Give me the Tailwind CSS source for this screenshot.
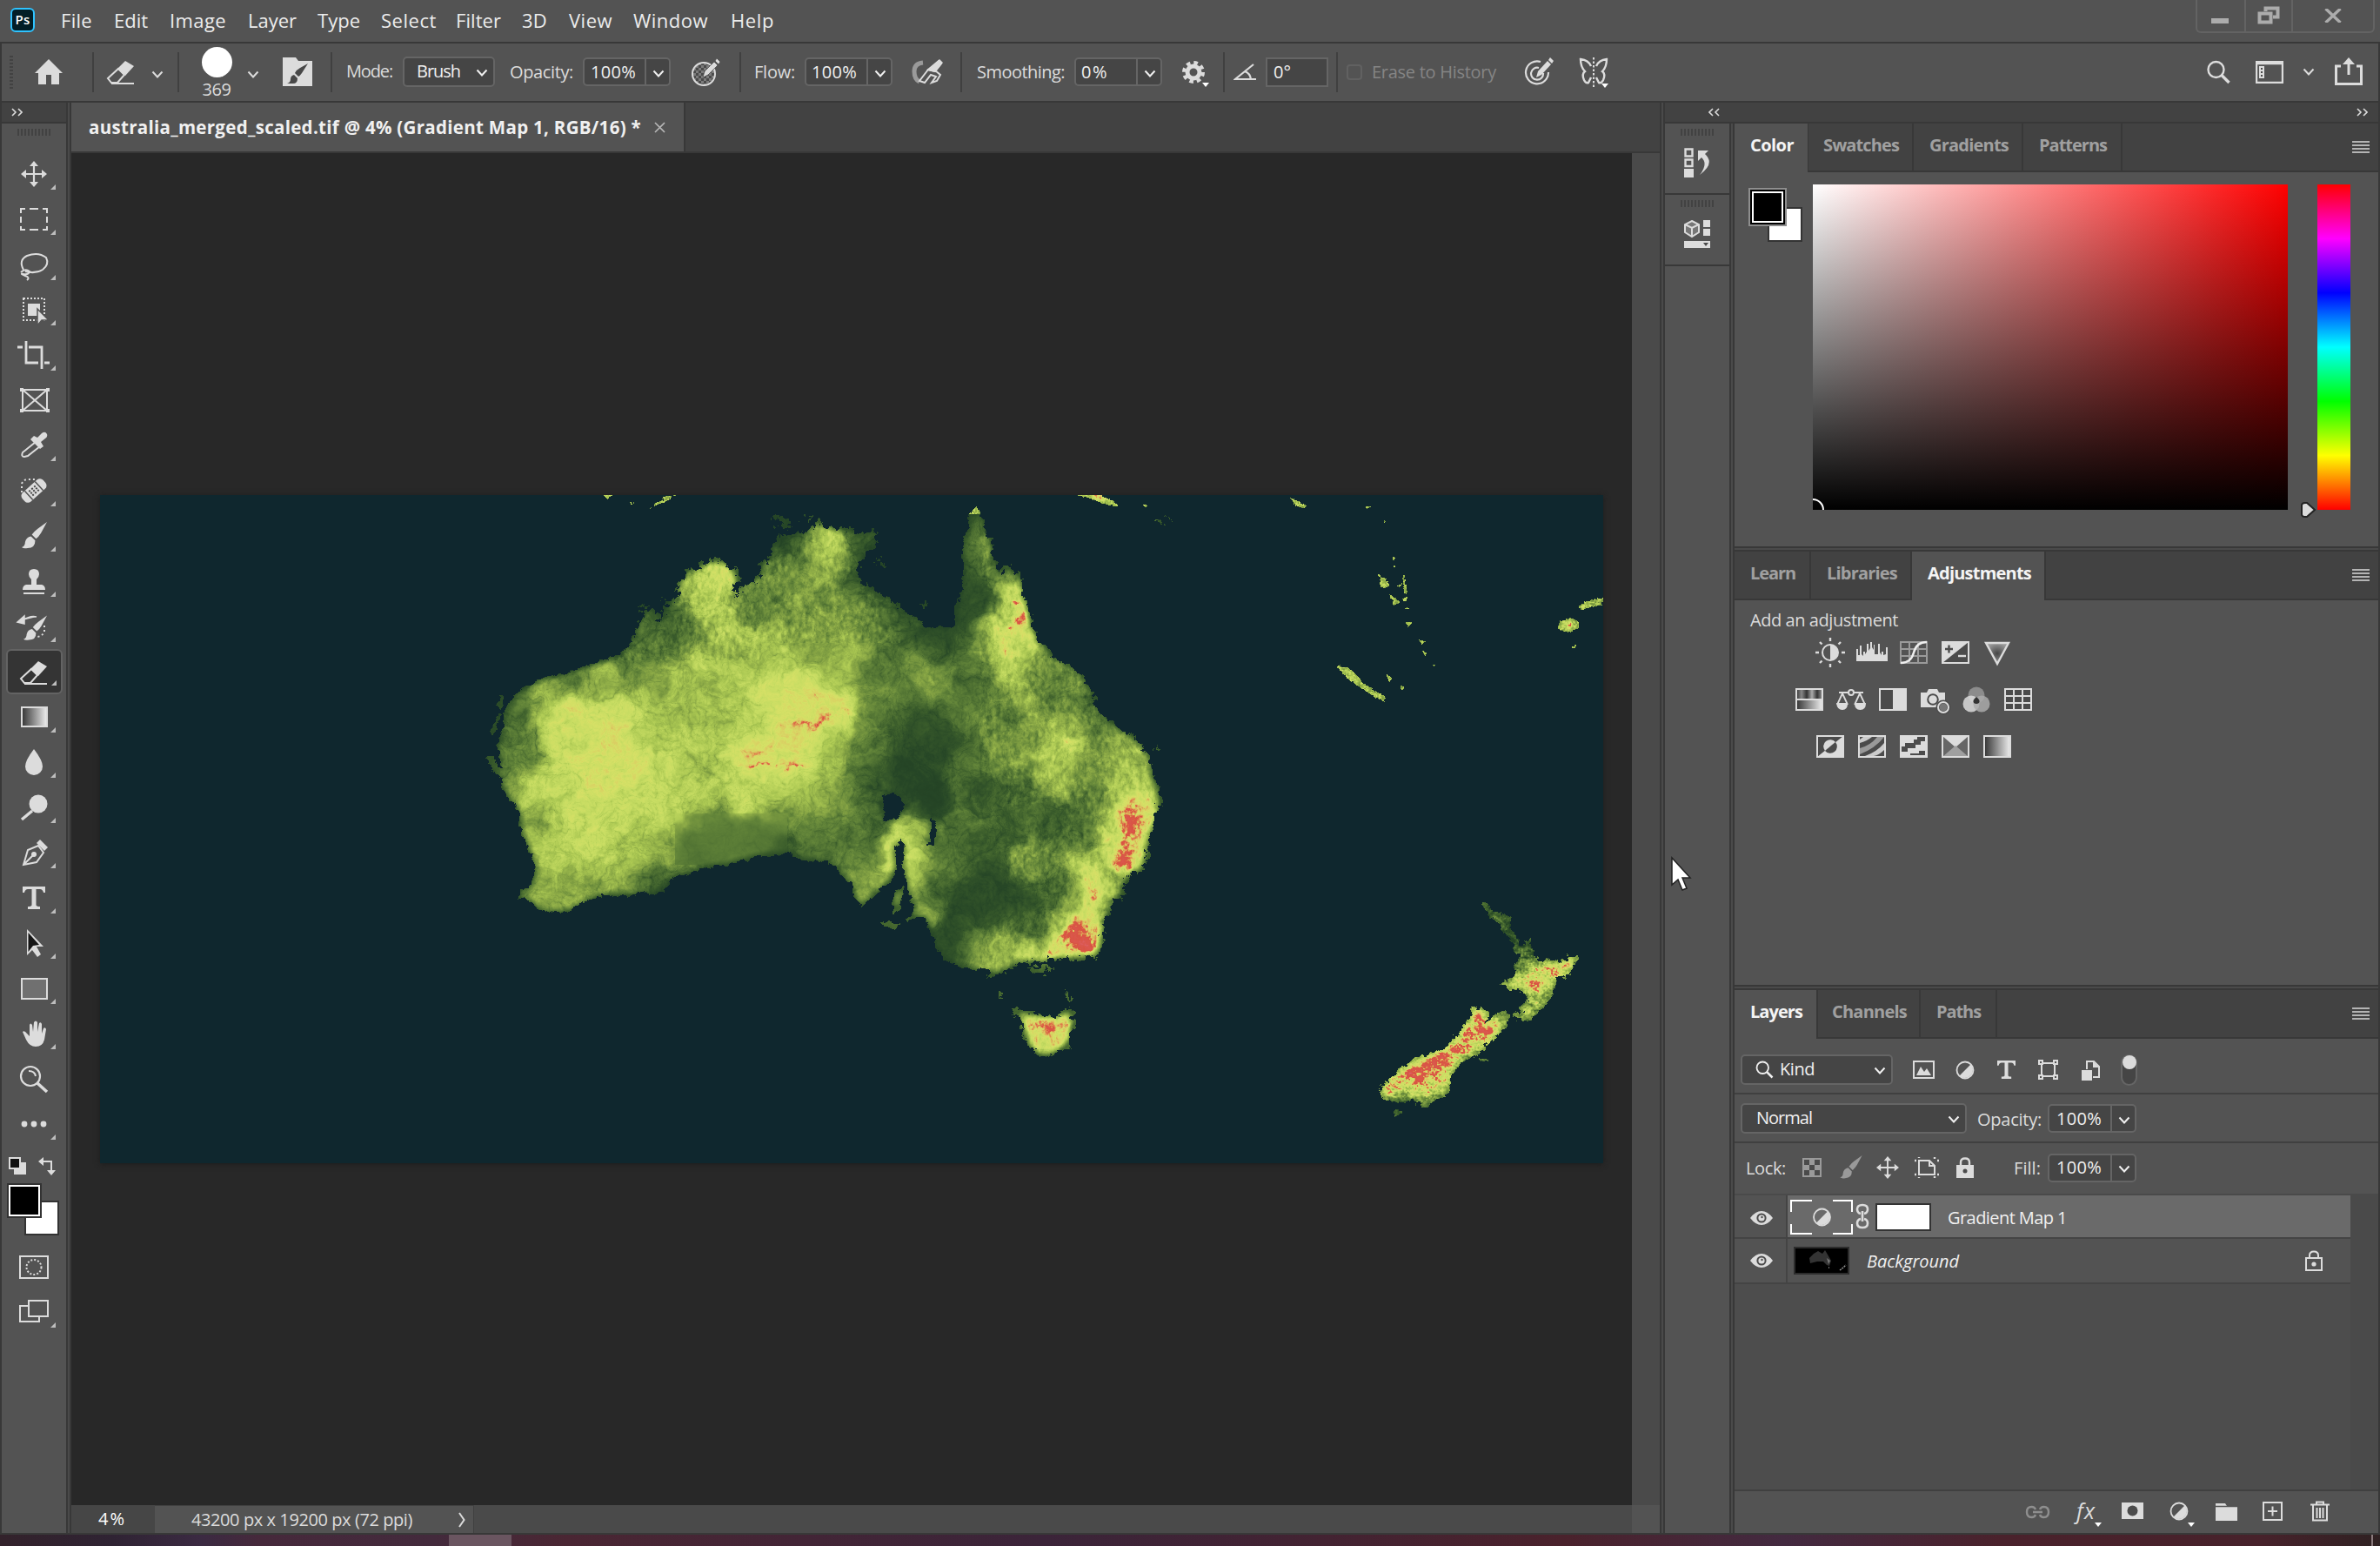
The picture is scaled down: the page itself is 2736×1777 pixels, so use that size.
<!DOCTYPE html>
<html lang="en">
<head>
<meta charset="utf-8">
<title>australia_merged_scaled.tif</title>
<script src="https://cdn.jsdelivr.net/npm/@tailwindcss/browser@4"></script>
</head>
<body class="w-[2736px] h-[1777px] overflow-hidden bg-[#383838] font-['Open_Sans','Noto_Sans',sans-serif] text-[20px] leading-none text-[#dcdcdc]">

<svg class="hidden">
  <symbol id="chev" viewBox="0 0 14 10"><path d="M1.5 1.5 L7 7.5 L12.5 1.5" fill="none" stroke="currentColor" stroke-width="2"/></symbol>
  <symbol id="menu" viewBox="0 0 20 14"><path d="M0 1H20M0 5H20M0 9H20M0 13H20" stroke="#b4b4b4" stroke-width="2"/></symbol>
  <symbol id="tri" viewBox="0 0 6 6"><path d="M6 0V6H0Z" fill="#bdbdbd"/></symbol>
  <symbol id="down" viewBox="0 0 8 5"><path d="M0 0H8L4 5Z" fill="#fff"/></symbol>
  <symbol id="eye" viewBox="0 0 26 16"><path d="M0 8Q6 0 13 0T26 8Q20 16 13 16T0 8Z" fill="#dcdcdc"/><circle cx="13" cy="8" r="5.6" fill="#4b4b4b"/><circle cx="13" cy="8" r="3.6" fill="#dcdcdc"/><circle cx="13.5" cy="7" r="1.2" fill="#4b4b4b"/></symbol>
  <symbol id="adj" viewBox="0 0 22 22"><circle cx="11" cy="11" r="9.5" fill="none" stroke="#dcdcdc" stroke-width="1.8"/><path d="M17.7 4.3A9.5 9.5 0 0 1 4.3 17.7Z" fill="#dcdcdc"/></symbol>
  <symbol id="mag" viewBox="0 0 28 28"><circle cx="11" cy="11" r="9" fill="none" stroke="currentColor" stroke-width="2.4"/><path d="M17.5 17.5L26 26" stroke="currentColor" stroke-width="3.4"/></symbol>
  <symbol id="mv" viewBox="-15 -15 30 30"><path d="M-11 0H11M0 -11V11" stroke="currentColor" stroke-width="2.2"/><path d="M-15 0L-9 -5V5ZM15 0L9 -5V5ZM0 -15L-5 -9H5ZM0 15L-5 9H5Z" fill="currentColor"/></symbol>
  <symbol id="brush" viewBox="-15 -16 30 32"><path d="M15 -16L8 -3Q5 2 2 4L-3 -1Q0 -5 4 -8ZM-4 1L1 6Q1 15 -8 15Q-13 16 -15 14Q-11 13 -11 8Q-10 2 -4 1Z" fill="currentColor"/></symbol>
  <symbol id="tee" viewBox="-13 -13 26 26"><path d="M-13 -13H13V-6H11Q10 -10 7 -10H2.5V8Q2.5 10 7 10V13H-7V10Q-2.500 10 -2.500 8V-10H-7Q-10 -10 -11 -6H-13Z" fill="#dcdcdc"/></symbol>
  <symbol id="grip" viewBox="0 0 38 8"><path d="M0 4H38" stroke="#424242" stroke-width="8" stroke-dasharray="2 2"/></symbol>
  <symbol id="eraser" viewBox="-17 -15 34 30"><path d="M-15 7L-3 -4L4 3L-4 12H-11Z" fill="none" stroke="#dcdcdc" stroke-width="2"/><path d="M-4 -4L5 -13L15 -7L5 4Z" fill="#dcdcdc"/><path d="M-11 13H15" stroke="#dcdcdc" stroke-width="2"/></symbol>
</svg>

<div class="flex flex-col w-full h-full">
  <!-- menu bar -->
  <div class="flex items-center h-[48px] bg-[#535353] text-[22px] text-[#ececec] shrink-0">
    <div class="ml-[12px] mt-[-3px] size-[28px] rounded-[6px] border-2 border-[#2fc3ff] bg-[#021e26] text-white text-[15px] font-semibold flex items-center justify-center"><span class="fit w-[17px]">Ps</span></div>
    <span class="fit ml-[30px] w-[36px] mt-[-1px]">File</span>
    <span class="fit ml-[25px] w-[39px] mt-[-1px]">Edit</span>
    <span class="fit ml-[25px] w-[65px] mt-[-1px]">Image</span>
    <span class="fit ml-[25px] w-[56px] mt-[-1px]">Layer</span>
    <span class="fit ml-[24px] w-[49px] mt-[-1px]">Type</span>
    <span class="fit ml-[24px] w-[64px] mt-[-1px]">Select</span>
    <span class="fit ml-[22px] w-[52px] mt-[-1px]">Filter</span>
    <span class="fit ml-[24px] w-[29px] mt-[-1px]">3D</span>
    <span class="fit ml-[25px] w-[50px] mt-[-1px]">View</span>
    <span class="fit ml-[24px] w-[86px] mt-[-1px]">Window</span>
    <span class="fit ml-[26px] w-[50px] mt-[-1px]">Help</span>
    <div class="ml-auto mr-[6px] self-start h-[38px] w-[206px] flex border-2 border-t-0 border-[#636363] rounded-b-[6px]">
      <div class="w-[56px] border-r-2 border-[#636363] flex items-center justify-center pt-[12px] pr-[2px]"><div class="w-[20px] h-[6px] bg-[#acacac]"></div></div>
      <div class="w-[54px] border-r-2 border-[#636363] flex items-center justify-center"><svg class="w-[26px] h-[22px]" viewBox="0 0 26 22"><path d="M9.500 6V2.500H23.500V12.500H18M2.500 8.500H15.500V18.500H2.500Z" fill="none" stroke="#acacac" stroke-width="4"/></svg></div>
      <div class="flex-1 flex items-center justify-center"><svg class="w-[20px] h-[16px]" viewBox="0 0 20 16"><path d="M1.500 0L18.500 16M18.500 0L1.500 16" stroke="#acacac" stroke-width="3.4"/></svg></div>
    </div>
  </div>

  <!-- options bar -->
  <div class="mt-[2px] ml-[2px] mr-[2px] flex items-center h-[66px] bg-[#535353] shrink-0">
    <svg class="ml-[9px] w-[4px] h-[38px] shrink-0" viewBox="0 0 4 38"><path d="M2 0V38" stroke="#424242" stroke-width="4" stroke-dasharray="2 2"/></svg>
    <svg class="ml-[25px] w-[32px] h-[30px] shrink-0" viewBox="0 0 32 30"><path d="M16 0L32 16H28V29H19V18H13V29H4V16H0Z" fill="#dcdcdc"/></svg>
    <div class="ml-[34px] w-[2px] h-[46px] bg-[#404040]"></div>
    <svg class="ml-[14px] w-[34px] h-[30px] shrink-0"><use href="#eraser"/></svg>
    <svg class="ml-[18px] mt-[5px] w-[14px] h-[10px] shrink-0"><use href="#chev"/></svg>
    <div class="ml-[16px] w-[2px] h-[46px] bg-[#404040]"></div>
    <div class="ml-[23px] w-[40px] h-[62px] flex flex-col items-center"><div class="size-[35px] mt-[2px] rounded-full bg-white shrink-0"></div><span class="fit w-[33px] mt-[0px]">369</span></div>
    <svg class="ml-[15px] mt-[5px] w-[14px] h-[10px] shrink-0"><use href="#chev"/></svg>
    <svg class="ml-[27px] w-[34px] h-[34px] shrink-0" viewBox="0 0 34 34"><path d="M0 0H15L18 4H34V33H0Z" fill="#dcdcdc"/><path d="M29 7L22 18Q20 21 18 22L14 18Q16 14 20 12ZM13 20L17 24Q17 30 12 30H5Q9 29 9 25Q9 21 13 20Z" fill="#484848"/></svg>
    <div class="ml-[21px] w-[2px] h-[46px] bg-[#404040]"></div>
    <span class="fit ml-[16px] w-[53px] mt-[-3px]">Mode:</span>
    <div class="ml-[12px] w-[106px] h-[35px] mt-[-1px] rounded-[5px] border-2 border-[#656565] bg-[#454545] flex items-center text-[#f0f0f0]"><span class="fit ml-[14px] w-[50px] mt-[-2px]">Brush</span><svg class="ml-[18px] mt-[3px] w-[14px] h-[10px]"><use href="#chev"/></svg></div>
    <span class="fit ml-[17px] w-[73px]">Opacity:</span>
    <div class="ml-[11px] w-[101px] h-[33px] mt-[-1px] rounded-[5px] border-2 border-[#656565] bg-[#454545] flex items-center text-[#f0f0f0]"><span class="fit ml-[7px] w-[52px]">100%</span><div class="ml-[10px] w-[2px] h-full bg-[#656565]"></div><svg class="ml-[7px] mt-[4px] w-[14px] h-[10px]"><use href="#chev"/></svg></div>
    <svg class="ml-[23px] w-[36px] h-[34px] shrink-0" viewBox="0 0 36 34"><defs><pattern id="ck" width="6" height="6" patternUnits="userSpaceOnUse"><rect width="6" height="6" fill="#7c7c7c"/><path d="M0 0H3V3H0ZM3 3H6V6H3Z" fill="#4a4a4a"/></pattern></defs><circle cx="15" cy="19" r="13" fill="url(#ck)" stroke="#dcdcdc" stroke-width="2"/><path d="M30 1L34 5L32 8L28 4ZM27 5L31 9L20 20L14 23L16 16Z" fill="#dcdcdc" stroke="#535353" stroke-width=".8"/></svg>
    <div class="ml-[20px] w-[2px] h-[46px] bg-[#404040]"></div>
    <span class="fit ml-[15px] w-[47px]">Flow:</span>
    <div class="ml-[11px] w-[101px] h-[33px] mt-[-1px] rounded-[5px] border-2 border-[#656565] bg-[#454545] flex items-center text-[#f0f0f0]"><span class="fit ml-[6px] w-[52px]">100%</span><div class="ml-[11px] w-[2px] h-full bg-[#656565]"></div><svg class="ml-[7px] mt-[4px] w-[14px] h-[10px]"><use href="#chev"/></svg></div>
    <svg class="ml-[21px] w-[38px] h-[30px] shrink-0" viewBox="0 0 38 30"><path d="M14 4Q4 5 4 14Q4 23 10 26" fill="none" stroke="#9a9a9a" stroke-width="5"/><path d="M32 2L35 5L28 14L20 12ZM20 12L10 25L16 27L23 18L29 20L24 27L30 25L34 18L28 13Z" fill="#535353" stroke="#dcdcdc" stroke-width="2"/><path d="M33 0L37 4L28 15L19 13Z" fill="#dcdcdc"/></svg>
    <div class="ml-[19px] w-[2px] h-[46px] bg-[#404040]"></div>
    <span class="fit ml-[17px] w-[101px]">Smoothing:</span>
    <div class="ml-[11px] w-[101px] h-[33px] mt-[-1px] rounded-[5px] border-2 border-[#656565] bg-[#454545] flex items-center text-[#f0f0f0]"><span class="fit ml-[6px] w-[31px]">0%</span><div class="ml-[32px] w-[2px] h-full bg-[#656565]"></div><svg class="ml-[7px] mt-[4px] w-[14px] h-[10px]"><use href="#chev"/></svg></div>
    <svg class="ml-[22px] w-[36px] h-[36px] shrink-0" viewBox="0 0 36 36"><circle cx="14" cy="18" r="7" fill="none" stroke="#dcdcdc" stroke-width="5"/><circle cx="14" cy="18" r="11" fill="none" stroke="#dcdcdc" stroke-width="4" stroke-dasharray="4.600 4.040"/><path d="M24 30H32L28 35Z" fill="#fff"/></svg>
    <div class="ml-[12px] w-[2px] h-[46px] bg-[#404040]"></div>
    <svg class="ml-[10px] w-[28px] h-[20px] shrink-0" viewBox="0 0 28 20"><path d="M23 1L2 18H26M13 9Q19 11 20 18" fill="none" stroke="#dcdcdc" stroke-width="2.200"/></svg>
    <div class="ml-[9px] w-[72px] h-[34px] border-2 border-[#656565] bg-[#454545] flex items-center text-[#f0f0f0]"><span class="fit ml-[7px] w-[20px]">0°</span></div>
    <div class="ml-[9px] w-[2px] h-[46px] bg-[#404040]"></div>
    <div class="ml-[10px] size-[18px] rounded-[4px] border-2 border-[#616161] shrink-0"></div>
    <span class="fit ml-[11px] w-[143px] text-[#858585]">Erase to History</span>
    <svg class="ml-[32px] w-[36px] h-[34px] shrink-0" viewBox="0 0 36 34"><path d="M19 5A13 13 0 1 0 28 17M17 12A7 7 0 1 0 22 18" fill="none" stroke="#dcdcdc" stroke-width="2.200"/><path d="M30 0L34 4L32 7L28 3ZM27 4L31 8L20 20L14 23L16 16Z" fill="#dcdcdc"/></svg>
    <svg class="ml-[26px] w-[38px] h-[38px] shrink-0" viewBox="0 0 38 38"><path d="M15 12Q12 5 3 4Q3 13 8 18Q4 21 7 28Q9 32 12 31L15 25M21 12Q24 5 33 4Q33 13 28 18Q32 21 29 28Q27 32 24 31L21 25" fill="none" stroke="#dcdcdc" stroke-width="2.400"/><path d="M18 2V38" stroke="#dcdcdc" stroke-width="2" stroke-dasharray="2.500 2"/><path d="M27 32H35L31 37Z" fill="#fff"/></svg>
    <svg class="ml-auto w-[29px] h-[28px] shrink-0"><use href="#mag"/></svg>
    <svg class="ml-[28px] w-[32px] h-[26px] shrink-0" viewBox="0 0 32 26"><path d="M1 1H31V25H1ZM1 3H31" fill="none" stroke="#dcdcdc" stroke-width="2.400"/><path d="M4 6H10V20H4Z" fill="#dcdcdc"/><path d="M6 8H8V10H6ZM6 12H8V14H6ZM6 16H8V18H6Z" fill="#484848"/></svg>
    <svg class="ml-[22px] w-[14px] h-[10px] shrink-0"><use href="#chev"/></svg>
    <svg class="ml-[23px] mr-[18px] w-[32px] h-[32px] mt-[-2px] shrink-0" viewBox="0 0 32 32"><path d="M7 10H1.500V30.500H30.500V10H25" fill="none" stroke="#dcdcdc" stroke-width="3"/><path d="M16 20V5" stroke="#dcdcdc" stroke-width="3"/><path d="M16 0L23 8H9Z" fill="#dcdcdc"/></svg>
  </div>

  <div class="mt-[2px] flex h-[1644px] shrink-0">
    <!-- tools -->
    <div class="ml-[2px] w-[74px] flex flex-col shrink-0">
      <div class="h-[22px] bg-[#424242] flex items-center pl-[11px]"><svg class="w-[13px] h-[10px]" viewBox="0 0 13 10"><path d="M1 1L5 5L1 9M8 1L12 5L8 9" fill="none" stroke="#dcdcdc" stroke-width="1.600"/></svg></div>
      <div class="mt-[2px] flex-1 bg-[#535353] flex flex-col">
        <svg class="ml-[18px] mt-[6px] w-[38px] h-[8px] shrink-0"><use href="#grip"/></svg>
        <div id="tools" class="mt-[18px] flex flex-col"></div>
        <div class="mt-[12px] flex h-[22px]"><svg class="ml-[8px] w-[20px] h-[20px]" viewBox="0 0 20 20"><path d="M6 6H20V20H6Z" fill="#dcdcdc"/><path d="M1 1H13V13H1Z" fill="#111" stroke="#dcdcdc" stroke-width="2"/></svg>
        <svg class="ml-[14px] w-[22px] h-[22px]" viewBox="0 0 22 22"><path d="M5 5H15V16" fill="none" stroke="#dcdcdc" stroke-width="2"/><path d="M0 5L6 0V10ZM10 15H20L15 21Z" fill="#dcdcdc"/></svg></div>
        <div class="relative mt-[8px] h-[62px] w-full">
          <div class="absolute left-[26px] top-[20px] size-[40px] bg-white border-2 border-[#333]"></div>
          <div class="absolute left-[6px] top-0 size-[40px] bg-black border-2 border-[#333] outline-2 -outline-offset-4 outline-white"></div>
        </div>
        <svg class="ml-[20px] mt-[21px] w-[34px] h-[27px] shrink-0" viewBox="0 0 34 27"><path d="M1 1H33V26H1Z" fill="none" stroke="#dcdcdc" stroke-width="2"/><circle cx="17" cy="13.500" r="8.500" fill="none" stroke="#dcdcdc" stroke-width="2" stroke-dasharray="2 2"/></svg>
        <svg class="ml-[20px] mt-[24px] w-[44px] h-[32px] shrink-0" viewBox="0 0 44 32"><path d="M1 7H23V25H1Z" fill="none" stroke="#dcdcdc" stroke-width="2"/><path d="M11 1H33V19H11Z" fill="#535353" stroke="#dcdcdc" stroke-width="2"/><path d="M42 26V32H36Z" fill="#bdbdbd"/></svg>
      </div>
    </div>
    <div class="ml-[2px] w-[2px] bg-[#4a4a4a] shrink-0"></div>

    <!-- document -->
    <div class="ml-[2px] w-[1826px] flex flex-col shrink-0">
      <div class="flex h-[56px] bg-[#424242] shrink-0">
        <div class="w-[706px] bg-[#535353] border-r-2 border-[#383838] flex items-center font-bold text-[#f0f0f0]">
          <span class="fit ml-[20px] w-[635px] mt-[1px] text-[20.5px]">australia_merged_scaled.tif @ 4% (Gradient Map 1, RGB/16) *</span>
          <svg class="ml-[15px] w-[13px] h-[13px]" viewBox="0 0 13 13"><path d="M1 1L12 12M12 1L1 12" stroke="#b8b8b8" stroke-width="1.600"/></svg>
        </div>
      </div>
      <div class="mt-[2px] flex h-[1554px]">
        <div class="w-[1794px] bg-[#282828] pl-[33px] pt-[393px]"><canvas id="map" width="1728" height="768" class="block w-[1728px] h-[768px] bg-[#0f272e] shadow-[0_1px_6px_#1c1c1c]"></canvas></div>
        <div class="w-[32px] bg-[#4a4a4a]"></div>
      </div>
      <div class="flex h-[32px] bg-[#4a4a4a] text-[20px] shrink-0">
        <div class="w-[96px] bg-[#464646] flex items-center"><span class="fit ml-[31px] w-[32px] text-white">4%</span></div>
        <div class="w-[367px] bg-[#535353] border-t-1 border-r-1 border-[#404040] flex items-center"><span class="fit ml-[42px] w-[254px]">43200 px x 19200 px (72 ppi)</span><svg class="ml-[53px] w-[8px] h-[18px]" viewBox="0 0 8 18"><path d="M1 1L6.500 9L1 17" fill="none" stroke="#dcdcdc" stroke-width="2"/></svg></div>
        <div class="ml-auto w-[32px] bg-[#535353]"></div>
      </div>
    </div>
    <div class="ml-[2px] w-[2px] bg-[#4a4a4a] shrink-0"></div>

    <!-- right dock -->
    <div class="ml-[2px] flex flex-col w-[820px] shrink-0">
      <div class="h-[22px] bg-[#424242] flex items-center shrink-0">
        <svg class="ml-[50px] w-[13px] h-[10px]" viewBox="0 0 13 10"><path d="M5 1L1 5L5 9M12 1L8 5L12 9" fill="none" stroke="#dcdcdc" stroke-width="1.600"/></svg>
        <svg class="ml-auto mr-[12px] w-[13px] h-[10px]" viewBox="0 0 13 10"><path d="M1 1L5 5L1 9M8 1L12 5L8 9" fill="none" stroke="#dcdcdc" stroke-width="1.600"/></svg>
      </div>
      <div class="mt-[2px] flex h-[1620px]">
        <div class="w-[74px] flex flex-col gap-[2px] shrink-0">
          <div class="h-[80px] bg-[#535353] flex flex-col items-center"><svg class="mt-[6px] w-[38px] h-[8px]"><use href="#grip"/></svg>
            <svg class="mt-[14px] w-[30px] h-[34px]" viewBox="0 0 30 34"><path d="M1.500 1.500H9.500V9.500H1.500ZM1.500 13.500H9.500V21H1.500Z" fill="none" stroke="#dcdcdc" stroke-width="2.400"/><path d="M0 24H11V34H0Z" fill="#dcdcdc"/><path d="M16 3H28L24 7Q36 18 18 31Q28 18 20 11L16 15Z" fill="#dcdcdc"/></svg></div>
          <div class="h-[80px] bg-[#535353] flex flex-col items-center"><svg class="mt-[6px] w-[38px] h-[8px]"><use href="#grip"/></svg>
            <svg class="mt-[15px] w-[30px] h-[33px]" viewBox="0 0 30 33"><path d="M9 1L17 5V14L9 19L1 14V5Z" fill="#777" stroke="#dcdcdc" stroke-width="2"/><path d="M1 5L9 9L17 5M9 9V19" fill="none" stroke="#dcdcdc" stroke-width="2"/><path d="M22 0H30V8H22ZM22 10H30V18H22ZM0 24H30V32H0Z" fill="#dcdcdc"/><path d="M22 26H28L25 30Z" fill="#484848"/></svg></div>
          <div class="flex-1 bg-[#535353]"></div>
        </div>
        <div class="ml-[2px] w-[2px] bg-[#4a4a4a] shrink-0"></div>
        <div class="ml-[2px] w-[740px] flex flex-col shrink-0">

          <!-- color panel -->
          <div class="h-[486px] bg-[#535353] flex flex-col shrink-0">
            <div class="flex h-[56px] bg-[#424242] font-bold text-[#a0a0a0] shrink-0">
              <div class="w-[85px] bg-[#535353] border-r-1 border-[#383838] pl-[18px] pt-[11px] text-[#f4f4f4]"><span class="fit block w-[50px]">Color</span></div>
              <div class="w-[121px] border-r-2 border-b-2 border-[#383838] pl-[17px] pt-[11px]"><span class="fit block w-[87px]">Swatches</span></div>
              <div class="w-[126px] border-r-2 border-b-2 border-[#383838] pl-[18px] pt-[11px]"><span class="fit block w-[91px]">Gradients</span></div>
              <div class="w-[114px] border-r-2 border-b-2 border-[#383838] pl-[18px] pt-[11px]"><span class="fit block w-[78px]">Patterns</span></div>
              <div class="flex-1 border-b-2 border-[#383838] flex justify-end pr-[10px] pt-[20px]"><svg class="w-[20px] h-[14px]"><use href="#menu"/></svg></div>
            </div>
            <div class="flex pt-[14px]">
              <div class="relative ml-[16px] w-[74px] h-[80px] shrink-0">
                <div class="absolute left-[22px] top-[26px] size-[40px] bg-white border-2 border-[#333]"></div>
                <div class="absolute left-0 top-[4px] size-[44px] bg-black border-2 border-[#8e8e8e] outline-2 -outline-offset-6 outline-white"></div>
              </div>
              <div class="w-[546px] h-[374px] overflow-hidden relative bg-[linear-gradient(to_bottom,transparent,#000),linear-gradient(to_right,#fff,#f00)]"><div class="absolute left-[-13px] bottom-[-13px] size-[26px] rounded-full border-2 border-white"></div></div>
              <svg class="ml-[14px] mt-[364px] w-[19px] h-[20px]" viewBox="0 0 19 20"><path d="M2 5Q2 2 6 2H8L17 10L8 18H6Q2 18 2 15Z" fill="#dcdcdc" stroke="#222" stroke-width="2"/></svg>
              <div class="ml-[1px] w-[38px] h-[374px] bg-[linear-gradient(to_bottom,#f00,#f0f,#00f,#0ff,#0f0,#ff0,#f00)]"></div>
            </div>
          </div>
          <div class="my-[2px] h-[2px] bg-[#4a4a4a] shrink-0"></div>

          <!-- adjustments panel -->
          <div class="h-[498px] bg-[#535353] flex flex-col shrink-0">
            <div class="flex h-[56px] bg-[#424242] font-bold text-[#a0a0a0] shrink-0">
              <div class="w-[88px] border-r-2 border-b-2 border-[#383838] pl-[18px] pt-[11px]"><span class="fit block w-[52px]">Learn</span></div>
              <div class="w-[116px] border-r-2 border-b-2 border-[#383838] pl-[18px] pt-[11px]"><span class="fit block w-[81px]">Libraries</span></div>
              <div class="w-[154px] bg-[#535353] border-r-2 border-[#383838] pl-[18px] pt-[11px] text-[#f4f4f4]"><span class="fit block w-[119px]">Adjustments</span></div>
              <div class="flex-1 border-b-2 border-[#383838] flex justify-end pr-[10px] pt-[20px]"><svg class="w-[20px] h-[14px]"><use href="#menu"/></svg></div>
            </div>
            <span class="fit block ml-[18px] mt-[9px] w-[170px] h-[25px]">Add an adjustment</span>
            <div class="flex ml-[86px] mt-[8px]">
              <svg class="w-[48px] h-[36px]" viewBox="-24 -18 48 36"><circle r="9" fill="none" stroke="#dcdcdc" stroke-width="2"/><path d="M0 -9A9 9 0 0 1 0 9Z" fill="#dcdcdc"/><path d="M0 -17V-13M0 13V17M-17 0H-13M13 0H17M-12 -12L-9.500 -9.500M12 12L9.500 9.500M-12 12L-9.500 9.500M12 -12L9.500 -9.500" stroke="#dcdcdc" stroke-width="2.400"/></svg>
              <svg class="w-[48px] h-[36px]" viewBox="-24 -18 48 36"><path d="M-18 10V-4H-16V3H-14V-8H-12V2L-10 4V-1H-8V2L-6 -1V-10H-4V-2L-2 -5V-12H0V-6L2 -3V-9H3V2H7V-10H9V0L11 3V-1H13V3L16 2V-6H18V10Z" fill="#dcdcdc"/></svg>
              <svg class="w-[48px] h-[36px]" viewBox="-24 -18 48 36"><path d="M-15 -12H15V12H-15ZM-5 -12V12M5 -12V12M-15 -4H15M-15 4H15" fill="none" stroke="#9a9a9a" stroke-width="2"/><path d="M-15 12Q-3 12 0 0T15 -12" fill="none" stroke="#eee" stroke-width="2.400"/></svg>
              <svg class="w-[48px] h-[36px]" viewBox="-24 -18 48 36"><path d="M-15 -12H15V12H-15Z" fill="#4b4b4b" stroke="#dcdcdc" stroke-width="2"/><path d="M-15 -12H15L-15 12Z" fill="#dcdcdc"/><path d="M-12 -4H-3M-7.500 -8.500V.5" stroke="#4b4b4b" stroke-width="2.400"/><path d="M3 4H12" stroke="#dcdcdc" stroke-width="2.400"/></svg>
              <svg class="w-[48px] h-[36px]" viewBox="-24 -18 48 36"><defs><radialGradient id="vg"><stop offset="0" stop-color="#444"/><stop offset="1" stop-color="#999"/></radialGradient></defs><path d="M-13 -11H13L0 13Z" fill="url(#vg)" stroke="#dcdcdc" stroke-width="2.400"/></svg>
            </div>
            <div class="flex ml-[62px] mt-[18px]">
              <svg class="w-[48px] h-[36px]" viewBox="-24 -18 48 36"><defs><linearGradient id="g1"><stop offset="0" stop-color="#333"/><stop offset="1" stop-color="#eee"/></linearGradient><linearGradient id="g2"><stop offset="0" stop-color="#333"/><stop offset=".2" stop-color="#888"/><stop offset=".4" stop-color="#333"/><stop offset=".6" stop-color="#aaa"/><stop offset=".8" stop-color="#333"/><stop offset="1" stop-color="#999"/></linearGradient></defs><path d="M-15 -12H15V12H-15Z" fill="url(#g1)"/><path d="M-15 -12H15V-1H-15Z" fill="url(#g2)"/><path d="M-15 -12H15V12H-15ZM-15 0H15" fill="none" stroke="#dcdcdc" stroke-width="2"/></svg>
              <svg class="w-[48px] h-[36px]" viewBox="-24 -18 48 36"><path d="M-14 -8H-3M3 -8H14M-10 -7L-16 6M-10 -7L-4 6M10 -7L16 6M10 -7L4 6" fill="none" stroke="#dcdcdc" stroke-width="1.800"/><circle cy="-8" r="3" fill="none" stroke="#dcdcdc" stroke-width="2"/><path d="M-17 4H-4Q-4 12 -10 12T-17 4ZM4 4H17Q17 12 10.500 12T4 4Z" fill="#dcdcdc"/></svg>
              <svg class="w-[48px] h-[36px]" viewBox="-24 -18 48 36"><path d="M-15 -12H15V12H-15Z" fill="#4b4b4b" stroke="#dcdcdc" stroke-width="2"/><path d="M0 -12H15V12H0Z" fill="#dcdcdc"/></svg>
              <svg class="w-[48px] h-[36px]" viewBox="-24 -18 48 36"><path d="M-16 -8H-9L-7 -12H3L5 -8H12V9H-16Z" fill="#dcdcdc"/><circle cx="-2" cy="0" r="5.800" fill="#dcdcdc" stroke="#4b4b4b" stroke-width="2"/><circle cx="10" cy="9" r="6.500" fill="#777" stroke="#4b4b4b" stroke-width="4"/><circle cx="10" cy="9" r="6" fill="none" stroke="#dcdcdc" stroke-width="2"/></svg>
              <svg class="w-[48px] h-[36px]" viewBox="-24 -18 48 36"><circle cy="-5" r="9.500" fill="#8c8c8c"/><circle cx="-6" cy="5" r="9.500" fill="#dcdcdc" opacity=".85"/><circle cx="6" cy="5" r="9.500" fill="#aaa" opacity=".85"/><path d="M0 -3Q5 1 3 4Q0 6 -3 4Q-5 1 0 -3Z" fill="#333"/></svg>
              <svg class="w-[48px] h-[36px]" viewBox="-24 -18 48 36"><path d="M-15 -12H15V12H-15Z" fill="#4b4b4b"/><path d="M-15 -12H15V12H-15ZM-5 -12V12M5 -12V12M-15 -4H15M-15 4H15" fill="none" stroke="#dcdcdc" stroke-width="2"/></svg>
            </div>
            <div class="flex ml-[86px] mt-[18px]">
              <svg class="w-[48px] h-[36px]" viewBox="-24 -18 48 36"><path d="M-15 -12H15V12H-15Z" fill="#4b4b4b" stroke="#dcdcdc" stroke-width="2"/><path d="M15 -12V12H-15Z" fill="#dcdcdc"/><path d="M6 -5A7.500 7.500 0 0 0 -6 5Z" fill="#dcdcdc"/><path d="M6 -5A7.500 7.500 0 0 1 -6 5Z" fill="#4b4b4b"/></svg>
              <svg class="w-[48px] h-[36px]" viewBox="-24 -18 48 36"><path d="M-14 -11H14V11H-14Z" fill="#4b4b4b"/><path d="M-14 2Q-2 -1 6 -11H14Q4 2 -14 9Z" fill="#999"/><path d="M-14 -4Q-6 -6 0 -11H-10L-14 -8ZM-8 11Q6 6 14 -4V4Q8 10 2 11Z" fill="#ccc"/><path d="M-15 -12H15V12H-15Z" fill="none" stroke="#dcdcdc" stroke-width="2"/></svg>
              <svg class="w-[48px] h-[36px]" viewBox="-24 -18 48 36"><path d="M-16 -13H16V13H-16Z" fill="#dcdcdc"/><path d="M-14 6V0H-10V-4H0V-8H4V-11H13V-6H8V-2H2V2H-7V6ZM-4 10V8H6V5H13V10Z" fill="#4b4b4b"/></svg>
              <svg class="w-[48px] h-[36px]" viewBox="-24 -18 48 36"><path d="M-15 -12H15V12H-15Z" fill="#666"/><path d="M-15 -12H15L0 1Z" fill="#dcdcdc"/><path d="M-15 12H15L0 -1Z" fill="#a0a0a0"/><path d="M-15 -12H15V12H-15Z" fill="none" stroke="#dcdcdc" stroke-width="2"/></svg>
              <svg class="w-[48px] h-[36px]" viewBox="-24 -18 48 36"><path d="M-15 -12H15V12H-15Z" fill="url(#g1)" stroke="#dcdcdc" stroke-width="2"/></svg>
            </div>
          </div>
          <div class="my-[2px] h-[2px] bg-[#4a4a4a] shrink-0"></div>

          <!-- layers panel -->
          <div class="h-[624px] bg-[#535353] flex flex-col shrink-0">
            <div class="flex h-[56px] bg-[#424242] font-bold text-[#a0a0a0] shrink-0">
              <div class="w-[96px] bg-[#535353] border-r-2 border-[#383838] pl-[18px] pt-[11px] text-[#f4f4f4]"><span class="fit block w-[60px]">Layers</span></div>
              <div class="w-[118px] border-r-2 border-b-2 border-[#383838] pl-[16px] pt-[11px]"><span class="fit block w-[86px]">Channels</span></div>
              <div class="w-[88px] border-r-2 border-b-2 border-[#383838] pl-[18px] pt-[11px]"><span class="fit block w-[51px]">Paths</span></div>
              <div class="flex-1 border-b-2 border-[#383838] flex justify-end pr-[10px] pt-[20px]"><svg class="w-[20px] h-[14px]"><use href="#menu"/></svg></div>
            </div>
            <div class="flex items-center h-[64px] border-b-2 border-[#404040] pt-[3px] shrink-0">
              <div class="ml-[7px] w-[175px] h-[35px] mt-[6px] rounded-[5px] border-2 border-[#656565] bg-[#454545] flex items-center text-[#f0f0f0]"><svg class="ml-[15px] w-[21px] h-[21px]"><use href="#mag"/></svg><span class="fit ml-[7px] w-[40px] mt-[-2px]">Kind</span><svg class="ml-[68px] mt-[3px] w-[14px] h-[10px]"><use href="#chev"/></svg></div>
              <svg class="ml-[23px] mt-[6px] w-[25px] h-[21px]" viewBox="0 0 25 21"><path d="M1 1H24V20H1Z" fill="none" stroke="#dcdcdc" stroke-width="2"/><path d="M4 17L9 7L13 13L16 9L21 17Z" fill="#dcdcdc"/></svg>
              <svg class="ml-[24px] mt-[6px] w-[22px] h-[22px]"><use href="#adj"/></svg>
              <svg class="ml-[26px] mt-[6px] w-[21px] h-[21px]"><use href="#tee"/></svg>
              <svg class="ml-[26px] mt-[6px] w-[23px] h-[23px]" viewBox="0 0 23 23"><path d="M4 4H19V19H4Z" fill="none" stroke="#dcdcdc" stroke-width="2"/><path d="M1 1H5V5H1ZM18 1H22V5H18ZM1 18H5V22H1ZM18 18H22V22H18Z" fill="#535353" stroke="#dcdcdc" stroke-width="2"/></svg>
              <svg class="ml-[27px] mt-[6px] w-[21px] h-[24px]" viewBox="0 0 21 24"><path d="M6 11V2H14L20 8V20H13" fill="none" stroke="#dcdcdc" stroke-width="2"/><path d="M13 2V9H20M0 12H12V24H0Z" fill="#dcdcdc"/></svg>
              <div class="ml-[24px] mt-[6px] w-[19px] h-[36px] rounded-full border-2 border-[#656565] bg-[#454545]"><div class="size-[16px] rounded-full bg-[#dcdcdc] -ml-[0.5px] -mt-[1px]"></div></div>
            </div>
            <div class="flex items-center h-[56px] border-b-2 border-[#404040] shrink-0">
              <div class="ml-[7px] w-[260px] h-[35px] mt-[1px] rounded-[5px] border-2 border-[#656565] bg-[#454545] flex items-center text-[#f0f0f0]"><span class="fit ml-[16px] w-[64px] mt-[-2px]">Normal</span><svg class="ml-[156px] mt-[3px] w-[14px] h-[10px]"><use href="#chev"/></svg></div>
              <span class="fit ml-[12px] w-[74px] mt-[3px]">Opacity:</span>
              <div class="ml-[7px] w-[102px] h-[33px] mt-[1px] rounded-[5px] border-2 border-[#656565] bg-[#454545] flex items-center text-[#f0f0f0]"><span class="fit ml-[8px] w-[52px]">100%</span><div class="ml-[10px] w-[2px] h-full bg-[#656565]"></div><svg class="ml-[7px] mt-[4px] w-[14px] h-[10px]"><use href="#chev"/></svg></div>
            </div>
            <div class="flex items-center h-[60px] border-b-2 border-[#4a4a4a] pb-[3px] shrink-0">
              <span class="fit ml-[13px] w-[46px] mt-[3px]">Lock:</span>
              <svg class="ml-[19px] w-[22px] h-[22px]" viewBox="0 0 22 22"><path d="M1 1H21V21H1Z" fill="#4b4b4b" stroke="#9a9a9a" stroke-width="2"/><path d="M8 1H14V8H8ZM1 8H8V14H1ZM14 8H21V14H14ZM8 14H14V21H8Z" fill="#9a9a9a"/></svg>
              <svg class="ml-[21px] w-[26px] h-[27px] text-[#9a9a9a]"><use href="#brush"/></svg>
              <svg class="ml-[16px] w-[26px] h-[26px]"><use href="#mv"/></svg>
              <svg class="ml-[18px] w-[28px] h-[24px]" viewBox="0 0 28 24"><path d="M5 4H17L23 10V20H5ZM17 4V10H23" fill="none" stroke="#dcdcdc" stroke-width="2"/><path d="M0 4H2M5 0V1M23 0V2M26 4H28M0 20H2M26 20H28M5 23V24M23 22V24" stroke="#dcdcdc" stroke-width="2.400"/></svg>
              <svg class="ml-[20px] w-[20px] h-[24px]" viewBox="0 0 20 24"><path d="M5 11V6Q5 1.500 10 1.500T15 6V11" fill="none" stroke="#dcdcdc" stroke-width="2.400"/><path d="M0 9H20V24H0Z" fill="#dcdcdc"/><circle cx="10" cy="16" r="2.500" fill="#4b4b4b"/></svg>
              <span class="fit ml-[46px] w-[31px] mt-[3px]">Fill:</span>
              <div class="ml-[8px] w-[102px] h-[33px] mt-[1px] rounded-[5px] border-2 border-[#656565] bg-[#454545] flex items-center text-[#f0f0f0]"><span class="fit ml-[8px] w-[52px]">100%</span><div class="ml-[10px] w-[2px] h-full bg-[#656565]"></div><svg class="ml-[7px] mt-[4px] w-[14px] h-[10px]"><use href="#chev"/></svg></div>
            </div>
            <div class="flex h-[338px] shrink-0">
              <div class="w-[708px] bg-[#4d4d4d] flex flex-col text-[#f0f0f0]">
                <div class="flex h-[50px] border-b-2 border-[#444]">
                  <div class="w-[61px] bg-[#535353] border-r-2 border-[#444] flex items-center pl-[18px] pt-[4px]"><svg class="w-[26px] h-[16px]"><use href="#eye"/></svg></div>
                  <div class="flex-1 bg-[#6a6a6a] flex items-center">
                    <svg class="ml-[3px] mt-[2px] w-[72px] h-[40px]" viewBox="0 0 72 40"><path d="M1 14V1H25M49 1H71V14M71 28V39H49M25 39H1V28" fill="none" stroke="#fff" stroke-width="2"/><use href="#adj" x="25.500" y="9" width="22" height="22"/></svg>
                    <svg class="ml-[3px] w-[16px] h-[30px]" viewBox="0 0 16 30"><path d="M6 12Q2 11 2 7Q2 2 8 2T14 7Q14 11 10 12M6 18Q2 19 2 23Q2 28 8 28T14 23Q14 19 10 18M8 9V21" fill="none" stroke="#dcdcdc" stroke-width="2.600"/></svg>
                    <div class="ml-[7px] mt-[2px] w-[64px] h-[32px] bg-white border-2 border-[#333]"></div>
                    <span class="fit ml-[19px] w-[137px] mt-[3px]">Gradient Map 1</span>
                  </div>
                </div>
                <div class="flex h-[52px] border-b-2 border-[#444]">
                  <div class="w-[61px] bg-[#535353] border-r-2 border-[#444] flex items-center pl-[18px]"><svg class="w-[26px] h-[16px]"><use href="#eye"/></svg></div>
                  <div class="flex-1 bg-[#535353] flex items-center">
                    <svg class="ml-[7px] w-[64px] h-[32px]" viewBox="0 0 64 32"><path d="M1 1H63V31H1Z" fill="#000" stroke="#2c2c2c" stroke-width="2"/><path d="M18 13L23 8L28 5L33 8L36 4L39 9L43 16L41 22L38 21L34 17L27 17L19 19Z" fill="#333"/><path d="M38 13L42 16L40 20Z" fill="#777"/><path d="M53 27L57 24L60 21M40 24H41" stroke="#999" stroke-width="1.500" stroke-dasharray="2 1"/></svg>
                    <span class="fit ml-[20px] w-[106px] italic mt-[1px]">Background</span>
                    <svg class="ml-auto mr-[32px] w-[20px] h-[24px]" viewBox="0 0 20 24"><path d="M5 9V6Q5 1.500 10 1.500T15 6V9M1 9H19V23H1Z" fill="none" stroke="#dcdcdc" stroke-width="2"/><circle cx="10" cy="16" r="2.600" fill="#dcdcdc"/></svg>
                  </div>
                </div>
              </div>
              <div class="flex-1 bg-[#4a4a4a]"></div>
            </div>
            <div class="flex items-center h-[50px] border-t-2 border-[#404040]">
              <svg class="ml-[334px] w-[29px] h-[16px]" viewBox="0 0 29 16"><path d="M12 5Q11 2 7.500 2Q2 2 2 8T7.500 14Q11 14 12 11M17 5Q18 2 21.500 2Q27 2 27 8T21.500 14Q18 14 17 11M9 8H20" fill="none" stroke="#8e8e8e" stroke-width="2.400"/></svg>
              <span class="fit ml-[30px] w-[22px] italic text-[25px] -mt-[4px]">fx</span>
              <svg class="ml-[-1px] mt-[29px] w-[8px] h-[5px]"><use href="#down"/></svg>
              <svg class="ml-[23px] mt-[-3px] w-[25px] h-[19px]" viewBox="0 0 25 19"><path d="M0 0H25V19H0Z" fill="#dcdcdc"/><circle cx="12.500" cy="9.500" r="6" fill="#4b4b4b"/></svg>
              <svg class="ml-[30px] mt-[-2px] w-[22px] h-[22px]"><use href="#adj"/></svg>
              <svg class="ml-[-1px] mt-[29px] w-[8px] h-[5px]"><use href="#down"/></svg>
              <svg class="ml-[24px] w-[25px] h-[20px]" viewBox="0 0 25 20"><path d="M0 0H11L13 3H25V20H0Z" fill="#dcdcdc"/><path d="M0 3.500H25" stroke="#535353" stroke-width="1.500"/></svg>
              <svg class="ml-[29px] mt-[-2px] w-[23px] h-[22px]" viewBox="0 0 23 22"><path d="M1 1H22V21H1ZM6 11H17M11.500 5.500V16.500" fill="none" stroke="#dcdcdc" stroke-width="2"/></svg>
              <svg class="ml-[32px] mt-[-2px] w-[22px] h-[24px]" viewBox="0 0 22 24"><path d="M0 4.500H22M7 4V1.500H15V4M3 5V22.500H19V5M7.500 8V20M11 8V20M14.500 8V20" fill="none" stroke="#dcdcdc" stroke-width="2"/></svg>
            </div>
          </div>
        </div>
      </div>
    </div>
  </div>
  <!-- desktop strip under the window -->
  <div class="mt-[2px] h-[13px] flex shrink-0 bg-[linear-gradient(to_right,#33222b,#2f2333_130px,#3b2a42_230px,#46293b_300px,#432a3c_500px,#4a2633_650px,#3b2439_1200px,#4a222c_1800px,#432a40_2050px,#4a222c_2300px,#47222b_2600px,#2f2122)]"><div class="ml-[516px] w-[72px] bg-[#6a5560]"></div><div class="ml-[2138px] w-[2px] bg-[#8a7a7c]"></div></div>
</div>

<!-- mouse pointer -->
<svg class="absolute left-[1919px] top-[984px] w-[26px] h-[42px]" viewBox="0 0 26 42"><path d="M3 2V33L10 27L15 39L20 37L15 25H24Z" fill="#fff" stroke="#222" stroke-width="1.500"/></svg>

<script>
const S='stroke="#dcdcdc" fill="none" stroke-width="2"', F='fill="#dcdcdc"';
const tools=[
 '<use href="#mv" x="-15" y="-15" width="30" height="30"/>',
 `<path d="M-15 -7V-12H-10M-5 -12H5M10 -12H15V-7M15 -3V4M15 8V12H10M5 12H-5M-10 12H-15V8M-15 4V-3" ${S}/>`,
 `<path d="M-12 6Q-18 -5 -8 -10Q5 -15 14 -8Q18 0 10 6Q2 11 -10 8" ${S}/><path d="M-15 9Q-10 4 -5 8Q-6 12 -12 11Q-17 10 -10 13Q-4 15 -8 18" ${S}/>`,
 `<path d="M-12 -13H12V12H-12Z" ${S} stroke-dasharray="2 2"/><path d="M-7 -7H7V7H-7Z" ${F}/><path d="M4 -1L17 12H9L4 18Z" fill="#dcdcdc" stroke="#535353" stroke-width="1.5"/>`,
 `<path d="M-19 -9H-13M-9 -16V9H5M-6 -9H9V16M12 9H18" stroke="#dcdcdc" fill="none" stroke-width="2.8"/>`,
 `<path d="M-13 -12H15V12H-13ZM-13 -12L15 12M15 -12L-13 12" ${S}/><path d="M-16 -14H-12V-10H-16ZM14 -14H18V-10H14ZM-16 10H-12V14H-16ZM14 10H18V14H14Z" ${F}/>`,
 `<path d="M2 -4L-13 8Q-15 13 -11 13L-7 12L7 1" ${S}/><path d="M-4 -7L0 -11L4 -9L9 -14Q13 -17 15 -13Q16 -10 13 -8L8 -4L11 1L7 4Z" ${F}/>`,
 `<path d="M-14 2V-8Q-12 -13 -7 -13H2" ${S} stroke-dasharray="2 3"/><g transform="rotate(-42)"><rect x="-16" y="-7" width="32" height="14" rx="5" ${F}/><path d="M-8 -7V7M8 -7V7" stroke="#535353" stroke-width="1.500"/><path d="M-5 -3H5M-5 0H5M-5 3H5" stroke="#484848" stroke-width="2" stroke-dasharray="2 2"/></g>`,
 '<use href="#brush" x="-14" y="-16" width="29" height="31"/>',
 `<path d="M-6 -8Q-6 -14 0 -14T6 -8Q6 -5 3 -2V4H9Q13 5 13 10H-13Q-13 5 -9 4H-3V-2Q-6 -5 -6 -8Z" ${F}/><path d="M-12 14H12" ${S}/>`,
 `<use href="#brush" x="-12" y="-13" width="27" height="30"/><path d="M-19 -5L-11 -12V-3ZM-13 -7Q-4 -13 3 -11" fill="#dcdcdc" stroke="#dcdcdc" stroke-width="1.500"/><path d="M12 -1V6Q10 11 4 12" ${S} stroke-dasharray="2 3"/>`,
 '<use href="#eraser" x="-17" y="-14" width="34" height="30"/>',
 `<path d="M-14 -11H15V11H-14Z" fill="url(#g1)" stroke="#dcdcdc" stroke-width="2"/>`,
 `<path d="M0 -15Q10 -2 10 5A10 10 0 0 1 -10 5Q-10 -2 0 -15Z" ${F}/>`,
 `<path d="M-2 4L-14 14" stroke="#dcdcdc" stroke-width="3.4"/><circle cx="5" cy="-4" r="10.500" ${F}/>`,
 `<path d="M-12 14L-7 -3L5 -8L11 0L3 11ZM-12 14L-1 3" ${S}/><circle cx="0" cy="2" r="3" ${F}/><path d="M3 -11L7 -15L16 -6L12 -2Z" ${F}/>`,
 '<use href="#tee" x="-13" y="-13" width="26" height="26"/>',
 `<path d="M-8 -16V14L-2 8L4 16L8 13L3 4H11Z" fill="#dcdcdc"/><path d="M-6.500 -12V10L-1 3L6 2Z" fill="#161616"/>`,
 `<path d="M-14 -11H15V12H-14Z" fill="#707070" stroke="#dcdcdc" stroke-width="2"/>`,
 `<path d="M-13 -2Q-11 -4 -8 0L-5 3L-5 -10Q-4 -13 -2 -10L-1 -2L0 -13Q2 -16 4 -13V-2L6 -12Q8 -14 9 -11V0L11 -6Q13 -8 14 -5L12 7Q10 15 2 15Q-5 15 -9 7Z" ${F}/>`,
 `<circle cx="-4" cy="-3" r="11" fill="none" stroke="#dcdcdc" stroke-width="2.200"/><path d="M-6 -9Q1 -9 2 -3" ${S}/><path d="M4 5L15 15" stroke="#dcdcdc" stroke-width="3.600"/>`,
 `<circle cx="-11" r="3.400" ${F}/><circle r="3.400" ${F}/><circle cx="11" r="3.400" ${F}/>`];
document.getElementById('tools').innerHTML=tools.map((t,i)=>
 `<div class="relative h-[52px] flex items-center ${i===11?'ml-[5px] w-[65px] rounded-[6px] border-2 border-[#636363] bg-[#343434] pl-[12px]':'pl-[19px]'}"><svg class="w-[36px] h-[40px] overflow-visible" viewBox="-18 -20 36 40">${t}</svg>${i===5||i===20?'':`<svg class="absolute bottom-[8px] ${i===11?'left-[50px]':'left-[56px]'} w-[6px] h-[6px]"><use href="#tri"/></svg>`}</div>`).join('');

// spread each label over the width of its slot
function fit(){
  document.querySelectorAll('.fit').forEach(el=>{
    const slot=+el.className.match(/w-\[(\d+)px\]/)[1];
    el.style.whiteSpace='nowrap';el.style.flexShrink=0;el.style.lineHeight='1.4';el.style.letterSpacing='0px';
    const r=document.createRange();r.selectNodeContents(el);
    const w=r.getBoundingClientRect().width;
    if(w)el.style.letterSpacing=((slot-w)/el.textContent.length).toFixed(3)+'px';
  });
}
fit();
addEventListener('load',()=>{fit();requestAnimationFrame(fit);setTimeout(fit,60);});
if(document.fonts)document.fonts.ready.then(fit);

// hypsometric terrain
const cv=document.getElementById('map'),W=1728,H=768,cx=cv.getContext('2d');
const A=(x,y)=>[405+x*.5485,-9+y*.4337], B=(x,y)=>[1365+x/3,-9+y*.4847];
const mk=document.createElement('canvas');mk.width=W;mk.height=H;const m=mk.getContext('2d',{willReadFrequently:true});
function poly(f,p,c){m.fillStyle=c||'#fff';m.beginPath();for(let i=0;i<p.length;i+=2)m.lineTo(...f(p[i],p[i+1]));m.fill();}
m.fillStyle='#000';m.fillRect(0,0,W,H);
poly(A,[1098,50,1112,85,1115,115,1128,130,1132,180,1138,215,1150,230,1168,210,1190,240,1198,280,1210,325,1215,370,1230,410,1260,450,1300,470,1325,500,1340,550,1360,595,1385,630,1420,655,1450,690,1468,730,1465,770,1480,800,1482,840,1478,880,1460,940,1450,1010,1415,1030,1405,1080,1385,1110,1365,1160,1360,1210,1352,1245,1290,1248,1230,1255,1190,1260,1165,1275,1135,1292,1090,1275,1062,1272,1030,1250,1010,1215,1005,1180,990,1140,975,1140,950,1155,968,1120,960,1080,950,1040,942,1000,948,960,940,930,925,960,930,1010,915,1045,890,1075,870,1095,862,1120,845,1095,835,1050,815,1030,800,1000,760,990,735,990,705,970,640,978,580,1000,530,1008,490,1025,455,1040,440,1075,380,1080,310,1080,270,1105,240,1128,190,1125,160,1095,138,1088,138,1068,162,1065,175,1020,165,970,145,920,140,860,110,810,100,770,80,740,68,710,85,715,95,745,105,745,95,690,105,640,108,600,130,550,180,510,230,495,290,470,350,445,380,395,390,350,400,315,425,320,440,355,440,300,470,300,470,260,495,220,530,200,560,192,590,215,600,245,625,250,650,230,645,200,665,180,670,150,690,125,740,120,765,90,800,110,850,120,895,115,890,150,860,190,850,240,880,270,920,295,945,330,985,350,990,370,1050,370,1055,320,1070,270,1070,210,1068,150,1080,110,1085,70]);
poly(A,[898,815,925,810,950,840,935,875,905,885],'#000');poly(A,[1000,870,1015,890,1012,950,997,950,1005,910],'#000');
poly(A,[600,245,615,250,600,290,592,270],'#000');poly(A,[440,300,448,305,447,350,436,350],'#000');
poly(A,[925,1072,947,1058,938,1118,925,1132]);poly(A,[893,1160,915,1153,942,1162,915,1172]);
poly(A,[1175,1383,1215,1397,1245,1402,1302,1386,1300,1430,1290,1480,1250,1507,1220,1500,1205,1470,1190,1420]);
poly(A,[665,90,680,78,715,80,712,98,685,100]);poly(A,[725,75,750,72,752,84]);poly(A,[888,190,900,185,902,208,890,206]);
poly(A,[100,545,106,550,102,590,93,580]);poly(A,[98,600,102,605,86,660,80,650]);poly(A,[1146,1332,1155,1335,1154,1354,1148,1352]);poly(A,[1286,1335,1296,1350,1305,1368,1297,1372]);
poly(A,[1472,680,1478,685,1470,710]);poly(A,[1205,1270,1262,1270,1235,1288,1215,1284]);poly(A,[982,310,1002,305,990,318]);
poly(A,[312,15,342,20,325,32]);poly(A,[410,60,445,25,470,20,440,40]);poly(A,[1285,15,1350,15,1385,35,1395,48,1370,46,1340,30]);poly(A,[1470,80,1492,88,1485,92]);poly(A,[1448,46,1460,48,1455,53]);poly(A,[1502,80,1510,80,1508,84]);poly(A,[372,42,382,42,376,47]);
poly(B,[670,987,690,985,715,1008,765,1020,790,1070,820,1090,825,1065,840,1075,855,1115,880,1120,940,1130,965,1112,1000,1112,990,1140,965,1165,925,1160,915,1200,890,1230,850,1260,815,1268,780,1258,815,1230,830,1215,800,1195,765,1190,735,1180,750,1170,780,1160,795,1120,780,1085,740,1050,700,1020]);
poly(B,[310,1440,340,1405,400,1375,470,1350,530,1335,580,1310,600,1280,635,1260,635,1240,665,1230,688,1245,680,1265,740,1243,762,1252,755,1275,720,1305,690,1325,650,1345,600,1365,575,1385,570,1405,550,1440,500,1460,470,1468,440,1455,390,1455,330,1452]);
poly(B,[168,420,210,428,260,463,340,500,330,510,280,488,210,457]);poly(B,[360,1494,378,1472,405,1480,378,1495]);poly(B,[660,1350,690,1352,688,1361,668,1358]);
poly(B,[8,25,35,32,68,45,55,50,30,44]);poly(B,[268,46,290,44,275,51]);poly(B,[313,201,325,215,340,215,352,237,325,240]);poly(B,[398,208,405,210,414,257,405,252]);poly(B,[348,253,365,260,387,272,368,279]);poly(B,[394,265,414,260,408,272]);poly(B,[378,232,396,227,386,237]);
poly(B,[406,320,432,320,418,330]);poly(B,[453,359,474,369,462,374]);poly(B,[466,387,484,395,475,401]);poly(B,[497,420,508,421,502,426]);poly(B,[340,440,362,455,350,460]);poly(B,[386,470,404,474,396,480]);poly(B,[360,164,372,167,366,175]);poly(B,[363,184,375,187,368,193]);poly(B,[329,81,339,83,334,88]);
poly(B,[932,335,940,316,975,310,1005,318,1005,335,970,344]);poly(B,[1003,285,1030,272,1090,262,1085,280,1050,283,1015,292]);poly(B,[975,378,1000,372,990,380]);poly(B,[404,282,430,292,410,288]);
const mask=m.getImageData(0,0,W,H).data;
const bk=document.createElement('canvas');bk.width=W;bk.height=H;const b=bk.getContext('2d',{willReadFrequently:true});b.filter='blur(6px)';b.drawImage(mk,0,0);
const soft=b.getImageData(0,0,W,H).data;
const T=new Float32Array(65536);let sd=12345;for(let i=0;i<65536;i++){sd=(sd*1664525+1013904223)>>>0;T[i]=sd/4294967296;}
function vn(x,y){const i=Math.floor(x),j=Math.floor(y);let u=x-i,v=y-j;u=u*u*(3-2*u);v=v*v*(3-2*v);
 const h=(a,c)=>T[((a&255)+((c*37+(c>>3)*11)&255)*256)&65535];
 const p=h(i,j),q=h(i+1,j),r=h(i,j+1),s=h(i+1,j+1);return p+(q-p)*u+(r-p)*v+(p-q-r+s)*u*v;}
function fbm(x,y,o){let s=0,a=.5;for(let k=0;k<o;k++){s+=a*vn(x,y);x=x*2.03+17;y=y*2.03+31;a*=.55;}return s/(1-Math.pow(.55,o))*.9;}
function ridge(x,y){let s=0,a=.5;for(let k=0;k<4;k++){s+=a*Math.pow(1-Math.abs(2*vn(x,y)-1),4);x=x*1.9+11;y=y*1.9+7;a*=.75;}return s;}
const P=[140,560,.2,220,600,.87,300,620,.88,150,680,.4,230,720,.82,330,700,.9,400,600,.7,470,540,.66,430,480,.55,330,520,.6,380,460,.35,250,500,.3,190,560,.6,540,480,.68,600,420,.66,540,300,.88,550,240,.84,575,370,.72,500,260,.6,500,370,.35,470,400,.3,400,420,.22,440,330,.12,600,320,.45,650,300,.35,680,230,.5,700,170,.15,790,150,.8,770,190,.7,760,250,.45,860,130,.15,850,220,.15,720,330,.5,800,330,.45,680,430,.68,750,420,.5,860,380,.38,930,330,.2,820,450,.62,780,470,.66,900,480,.38,750,530,.86,700,560,.86,750,600,.92,700,640,.9,830,600,.88,650,700,.9,720,750,.88,800,720,.74,620,630,.72,560,600,.66,480,650,.7,430,700,.74,500,720,.7,400,760,.86,300,800,.88,300,860,.82,200,830,.74,160,880,.54,220,930,.72,320,900,.79,420,860,.78,500,800,.74,600,810,.76,700,820,.7,560,900,.36,480,970,.32,640,940,.34,700,960,.2,720,880,.42,400,950,.66,350,1010,.66,240,1020,.68,200,1090,.55,300,1060,.46,420,1050,.22,780,920,.32,830,960,.35,880,1030,.52,850,880,.38,800,800,.5,870,780,.15,860,690,.4,890,640,.34,900,580,.4,930,680,.08,960,750,.02,1000,830,.02,900,900,.2,1000,620,.12,960,520,.32,1000,470,.52,1030,530,.44,1000,400,.08,1060,400,.08,1080,300,.08,1090,200,.18,1125,170,.55,1100,100,.2,1180,320,.76,1150,430,.9,1200,420,.84,1180,480,.72,1110,450,.5,1240,480,.32,1100,500,.22,1070,600,.36,1150,600,.36,1210,580,.6,1260,540,.32,1310,520,.5,1250,640,.56,1340,640,.42,1290,700,.84,1260,750,.72,1380,680,.52,1350,590,.35,1150,720,.42,1190,700,.5,1070,750,.3,1040,680,.1,1100,830,.18,1200,800,.28,1300,780,.4,1390,760,.6,1420,720,.6,1450,780,.72,1350,850,.28,1250,870,.2,1150,900,.18,1070,880,.3,1430,880,.97,1420,960,.95,1380,900,.75,1300,930,.28,1210,970,.46,1240,1020,.3,1120,950,.15,1050,970,.28,1030,1010,.38,1010,950,.08,968,930,.95,964,1020,.95,975,1090,.86,1000,1080,.2,1000,1040,.25,1050,1080,.06,1150,1060,.08,1200,1130,.08,1280,1080,.2,1310,1010,.6,1340,1050,.95,1320,1130,.86,1320,1180,1,1250,1220,.93,1350,1200,.9,1390,1060,.35,1240,1170,.4,1190,1180,.15,1100,1150,.1,1030,1180,.1,1100,1230,.6,1160,1230,.7,1040,1230,.08,1390,1100,.45,1455,930,.65,1200,1400,.82,1240,1430,.97,1285,1410,.85,1240,1480,.82,690,90,.1,330,20,.85,440,30,.75,1340,25,.95];
const Q=[700,1015,.35,770,1050,.15,820,1110,.3,850,1160,.85,900,1140,.85,970,1125,.8,840,1240,.6,880,1200,.65,750,1178,.8,340,1430,.96,400,1400,1.0,470,1370,1.04,450,1420,.94,540,1350,1.04,530,1400,.9,600,1335,1.0,620,1365,.3,690,1290,1.0,655,1245,.97,740,1250,.65,720,1300,.78,400,1460,.2,480,1455,.55,250,465,.9,350,450,.1,395,474,.1,970,325,.88,1040,275,.7,30,38,.85,330,220,.85,410,240,.85,460,370,.85,385,1485,.5];
const C=[];for(let i=0;i<P.length;i+=3)C.push([...A(P[i],P[i+1]),P[i+2],1/(2*17*14)]);for(let i=0;i<Q.length;i+=3)C.push([...B(Q[i],Q[i+1]),Q[i+2],1/(2*11*11)]);
const K=[[255,585,34,16,.15],[740,628,46,10,.16],[820,605,26,6,.18],[640,690,30,14,.09],[655,733,32,5,.17],[715,740,26,5,.18],[750,560,40,12,.06],[1155,445,18,26,.18],[1195,350,11,26,.3],[1187,300,7,12,.34],[1178,385,8,10,.22],[1222,420,5,8,.25],[1288,682,15,13,.2],[1425,900,22,60,.3],[1412,985,14,22,.28],[1370,920,8,10,.22],[1350,1060,24,40,.24],[1315,1160,22,36,.22],[1300,1200,50,20,.17],[1235,1237,36,14,.24],[1335,1215,20,14,.17],[1238,1430,28,14,.24],[1280,1412,7,8,.17],[970,960,6,18,.06],[325,20,10,8,.3],[1350,26,26,8,.3]].map(k=>[...A(k[0],k[1]),k[2]*.5485,k[3]*.4337,k[4]])
 .concat([[855,1178,34,10,.34],[865,1198,9,16,.32],[920,1150,26,9,.2],[968,1128,14,10,.24],[748,1178,7,6,.3],[690,1290,46,14,.2],[655,1248,20,12,.22],[590,1330,50,14,.2],[520,1355,50,16,.2],[430,1390,44,20,.2],[455,1417,14,8,.2],[820,1240,14,8,.26],[205,437,14,5,.25],[305,490,20,5,.3],[972,326,6,7,.3],[325,230,5,5,.35],[319,212,4,5,.35],[387,232,5,4,.35]].map(k=>[...B(k[0],k[1]),k[2]/3,k[3]*.4847,k[4]]));
const g=3,GW=Math.ceil(W/g)+2,GH=Math.ceil(H/g)+2,G=new Float32Array(GW*GH);
for(let j=0;j<GH;j++)for(let i=0;i<GW;i++){const x=i*g,y=j*g;let s=1e-7*.5,t=1e-7;
 for(const c of C){const dx=x-c[0],dy=y-c[1],d=(dx*dx+dy*dy)*c[3];if(d<14){const w=Math.exp(-d);s+=w*c[2];t+=w;}}
 s/=t;for(const k of K){const dx=(x-k[0])/k[2],dy=(y-k[1])/k[3],d=(dx*dx+dy*dy)/1.3;if(d<8)s+=k[4]*Math.exp(-d);}
 G[j*GW+i]=s;}
const R=[[-.2,30,58,34],[.05,38,70,38],[.2,58,92,43],[.4,98,132,57],[.55,134,164,68],[.7,170,199,82],[.82,198,220,98],[.93,214,224,102],[1.0,218,204,98],[1.06,222,140,80],[1.12,217,84,66],[1.35,218,88,80],[1.6,226,110,140]];
const out=cx.createImageData(W,H),D=out.data;
for(let y=0;y<H;y++)for(let x=0;x<W;x++){const o=(y*W+x)*4;let r=15,gg=39,bb=46;
 if(soft[o]>4){
  const nz=x>1340&&y>290,isle=x>1340&&y<=290||y<22;
  const north=y<170&&x>610&&x<920, cd=isle?4:nz?12:north?22:(x>1010?18:x>575&&x<640&&y<170?20:9);
  const n1=fbm(x/6,y/6,4)-.5,n2=fbm(x/6+90,y/6+40,4)-.5;
  const sx=Math.max(0,Math.min(W-1,Math.round(x+n1*cd))),sy=Math.max(0,Math.min(H-1,Math.round(y+n2*cd)));
  const s=soft[o]/255;
  if(mask[(sy*W+sx)*4]>110&&!(north&&s<.8&&vn(x/2.2,y/2.8)>.55+s*.5)){
   const wx=x+(fbm(x/30,y/30,4)-.5)*34,wy=y+(fbm(x/30+50,y/30+9,4)-.5)*34;
   const gx=Math.max(0,nz||isle?x+n1*5:wx)/g,gy=Math.max(0,nz||isle?y+n2*5:wy)/g,i=Math.min(GW-2,gx|0),j=Math.min(GH-2,gy|0),u=gx-i,v=gy-j,q=j*GW+i;
   const e0=(G[q]*(1-u)+G[q+1]*u)*(1-v)+(G[q+GW]*(1-u)+G[q+GW+1]*u)*v;
   const flat=(x>660&&x<790&&y>365&&y<425)?.25:1;
   let e=e0;
   if(nz||isle){
    e+=(fbm((x+y)/9,(y-x*.4)/4,4)-.5)*(e0>.8?.6:.8)+(vn(x/1.8,y/1.8)-.5)*.34;
   }else{
    const west=x<760?1:.8,hi=Math.max(0,Math.min(1,(e0-.9)*6));
    const mid=Math.max(0,Math.min(1,1-Math.abs(e0-.5)*2));
    e+=(fbm(wx/20,wy/20,5)-.49)*(.12+.26*mid+.14*hi)*flat;
    e-=(ridge(wx/15+3,wy/15)-.46)*(.05+.14*west*(e0>.15?1:.3))*flat*(1-hi*.4);
    e+=(fbm(x/3,y/3,3)-.5)*(.05+.08*mid+.3*hi)*flat;
    if(x>1010||north||(y<190&&x<760))e+=(fbm(x/4+7,y/7,3)-.5)*.34*(e0>.25?1:.3);
   }
   const c=Math.max(0,Math.min(1,(s-.4)/.5));
   e*=nz||isle?.6+.4*c:.3+.7*c;
   if(isle)e=Math.max(e,.4+vn(x/1.5,y/1.5)*.5);
   let k=1;while(k<R.length-1&&e>R[k][0])k++;
   const a=R[k-1],z=R[k],f=Math.max(0,Math.min(1,(e-a[0])/(z[0]-a[0])));
   r=a[1]+(z[1]-a[1])*f;gg=a[2]+(z[2]-a[2])*f;bb=a[3]+(z[3]-a[3])*f;
  }}
 D[o]=r;D[o+1]=gg;D[o+2]=bb;D[o+3]=255;}
cx.putImageData(out,0,0);
</script>
</body>
</html>
